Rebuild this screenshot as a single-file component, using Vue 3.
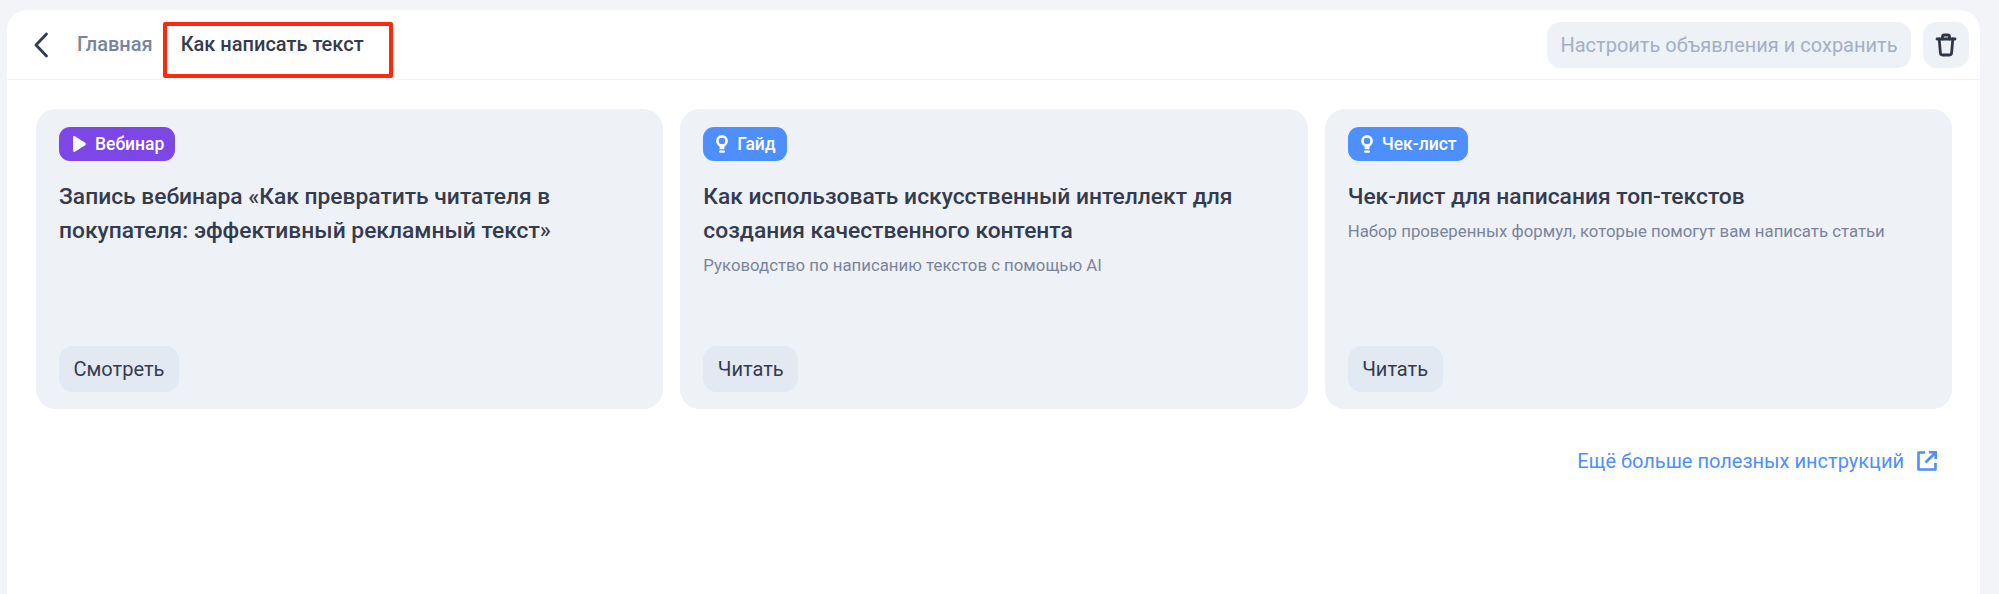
<template>
	<div class="page">
		<div class="panel">
			<header class="header">
				<button class="back" type="button" aria-label="Назад">
					<svg width="16" height="26" viewBox="0 0 16 26" fill="none">
						<path d="M13.5 2 L3 13 L13.5 24" stroke="#343b4f" stroke-width="2.8" stroke-linecap="round" stroke-linejoin="round" />
					</svg>
				</button>
				<span class="crumb">Главная</span>
				<span class="crumb current">
					Как написать текст
					<span class="marker"></span>
				</span>
				<div class="actions">
					<button class="save" type="button">Настроить объявления и сохранить</button>
					<button class="trash" type="button" aria-label="Удалить">
						<svg width="22" height="24" viewBox="0 0 22 24" fill="none" stroke="#2f3648" stroke-width="2.8" stroke-linecap="round" stroke-linejoin="round">
							<path d="M2 6 H20" />
							<path d="M7.5 6 V3.8 C7.5 2.8 8.2 2 9.2 2 H12.8 C13.8 2 14.5 2.8 14.5 3.8 V6" />
							<path d="M4.2 6 L5.4 20 C5.5 21.2 6.3 22 7.5 22 H14.5 C15.7 22 16.5 21.2 16.6 20 L17.8 6" />
						</svg>
					</button>
				</div>
			</header>

			<section class="content">
				<div class="cards">
					<article v-for="card in cards" :key="card.title" class="card">
						<span class="badge" :class="card.kind">
							<svg v-if="card.kind === 'video'" width="16" height="18" viewBox="0 0 16 18">
								<path d="M2 2.2 C2 1.2 3 .7 3.9 1.2 L14.2 7.8 C15 8.3 15 9.7 14.2 10.2 L3.9 16.8 C3 17.3 2 16.8 2 15.8 Z" fill="#fff" />
							</svg>
							<svg v-else width="14" height="20" viewBox="0 0 14 20" fill="none" stroke="#fff">
								<circle cx="7" cy="7" r="4.6" stroke-width="2.6" />
								<path d="M5.4 12 V14.4 H8.6 V12" stroke-width="1.6" fill="#fff" />
								<path d="M5 17.6 H9" stroke-width="2.2" stroke-linecap="round" />
							</svg>
							{{ card.label }}
						</span>
						<h3 class="title">{{ card.title }}</h3>
						<p v-if="card.text" class="text">{{ card.text }}</p>
						<button class="open" type="button">{{ card.action }}</button>
					</article>
				</div>

				<a class="more" href="#" @click.prevent>
					Ещё больше полезных инструкций
					<svg width="22" height="22" viewBox="0 0 22 22" fill="none" stroke="#4d8fff" stroke-width="2.6">
						<path d="M9 2.5 H2.5 V19.5 H19.5 V13" stroke-linejoin="round" />
						<path d="M9.5 12.5 L19 3" />
						<path d="M13 2.3 H19.7 V9" />
					</svg>
				</a>
			</section>
		</div>
	</div>
</template>

<script setup>
const cards = [
	{
		kind: "video",
		label: "Вебинар",
		title: "Запись вебинара «Как превратить читателя в покупателя: эффективный рекламный текст»",
		action: "Смотреть"
	},
	{
		kind: "guide",
		label: "Гайд",
		title: "Как использовать искусственный интеллект для создания качественного контента",
		text: "Руководство по написанию текстов с помощью AI",
		action: "Читать"
	},
	{
		kind: "guide",
		label: "Чек-лист",
		title: "Чек-лист для написания топ-текстов",
		text: "Набор проверенных формул, которые помогут вам написать статьи",
		action: "Читать"
	}
]
</script>

<style>
html,
body {
	background: #f2f4f7;
}
</style>

<style scoped>
.page {
	box-sizing: border-box;
	height: 594px;
	padding: 10px 19px 0 7px;
	overflow: hidden;
	font-family: Roboto, "Noto Sans", sans-serif;
	color: #343b4f;
}

.panel {
	height: 584px;
	background: #fff;
	border-radius: 20px 20px 0 0;
}

.header {
	box-sizing: border-box;
	height: 70px;
	display: flex;
	align-items: center;
	padding: 0 11px 0 26px;
	border-bottom: 1px solid #f1f3f7;
}

.back {
	display: flex;
	padding: 0;
	margin-right: 28px;
	border: 0;
	background: none;
}

.crumb {
	margin-bottom: 2px;
	font-size: 20px;
	font-weight: 500;
	color: #7a849d;
}

.current {
	position: relative;
	margin-left: 28px;
	color: #343b4f;
}

.marker {
	position: absolute;
	left: -18px;
	right: -29px;
	top: -10px;
	height: 48px;
	border: 4px solid #fa2a0c;
	border-radius: 2px;
}

.actions {
	display: flex;
	gap: 12px;
	margin-left: auto;
}

.save,
.trash {
	height: 46px;
	border: 0;
	border-radius: 14px;
	background: #eef1f6;
	font-family: inherit;
}

.save {
	width: 364px;
	padding: 0;
	font-size: 20px;
	color: #a5afc4;
}

.trash {
	width: 46px;
	display: flex;
	align-items: center;
	justify-content: center;
	padding: 0;
}

.content {
	padding: 29px 28px 0 29px;
}

.cards {
	display: grid;
	grid-template-columns: repeat(3, 1fr);
	gap: 17px;
}

.card {
	box-sizing: border-box;
	height: 300px;
	display: flex;
	flex-direction: column;
	align-items: flex-start;
	padding: 18px 23px 17px;
	border-radius: 20px;
	background: #eef1f6;
}

.badge {
	box-sizing: border-box;
	height: 34px;
	display: inline-flex;
	align-items: center;
	gap: 8px;
	padding: 0 11px 0 12px;
	border-radius: 11px;
	font-size: 17.5px;
	font-weight: 500;
	color: #fff;
}

.video {
	background: #7c47e6;
}

.guide {
	background: #4d8fff;
}

.title {
	margin: 19px 0 0;
	font-size: 22.8px;
	font-weight: 500;
	line-height: 34px;
}

.text {
	margin: 5px 0 0;
	font-size: 16.8px;
	line-height: 24px;
	color: #7a849d;
}

.open {
	height: 46px;
	margin-top: auto;
	padding: 0 14.5px;
	border: 0;
	border-radius: 14px;
	background: #e3e9f2;
	font-family: inherit;
	font-size: 20px;
	color: #343b4f;
}

.more {
	display: flex;
	align-items: center;
	justify-content: flex-end;
	gap: 12px;
	height: 24px;
	margin-top: 40px;
	padding-right: 14px;
	font-size: 20px;
	color: #4d8fff;
	text-decoration: none;
}
</style>
